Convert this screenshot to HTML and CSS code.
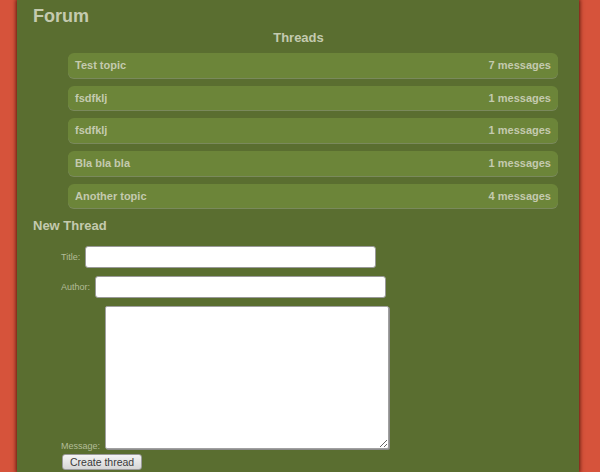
FILE: index.html
```html
<!DOCTYPE html>
<html lang="en">
<head>
<meta charset="utf-8">
<title>Forum</title>
<link rel="stylesheet" href="styles.css">
</head>
<body>
<div class="page">
  <h1 class="title">Forum</h1>
  <h2 class="threads-title">Threads</h2>
  <ul class="threads">
    <li class="thread"><span class="thread-name">Test topic</span><span class="thread-count">7 messages</span></li>
    <li class="thread"><span class="thread-name">fsdfklj</span><span class="thread-count">1 messages</span></li>
    <li class="thread"><span class="thread-name">fsdfklj</span><span class="thread-count">1 messages</span></li>
    <li class="thread"><span class="thread-name">Bla bla bla</span><span class="thread-count">1 messages</span></li>
    <li class="thread"><span class="thread-name">Another topic</span><span class="thread-count">4 messages</span></li>
  </ul>
  <h2 class="new-title">New Thread</h2>
  <form class="new-form">
    <div class="field">
      <label class="label" for="t">Title:</label>
      <input class="input" id="t" type="text">
    </div>
    <div class="field">
      <label class="label" for="a">Author:</label>
      <input class="input" id="a" type="text">
    </div>
    <div class="field field-message">
      <label class="label label-message" for="m">Message:</label>
      <textarea class="textarea" id="m"></textarea>
    </div>
    <div class="actions">
      <button class="button" type="button">Create thread</button>
    </div>
  </form>
</div>
</body>
</html>
```

FILE: styles.css
```css
html, body {
  margin: 0;
  padding: 0;
}
body {
  background: #d6533b;
  font-family: "Liberation Sans", Arial, sans-serif;
  color: #c4caaf;
  height: 472px;
  overflow: hidden;
}
.page {
  width: 562px;
  margin: 0 0 0 17px;
  min-height: 472px;
  box-sizing: border-box;
  padding: 6px 15px 0 16px;
  background: #5a6e30;
  box-shadow: 0 0 4px 1px rgba(60, 10, 0, 0.8);
}
.title {
  margin: 0;
  font-size: 18px;
  font-weight: bold;
  line-height: normal;
}
.threads-title {
  margin: 3px 0 0;
  text-align: center;
  font-size: 13px;
  font-weight: bold;
  line-height: 15px;
}
.threads {
  list-style: none;
  margin: 8px 6px 0 35px;
  padding: 0;
}
.thread {
  display: flex;
  justify-content: space-between;
  align-items: baseline;
  padding: 6px 7px 6px 7px;
  margin-bottom: 8px;
  height: 12.7px;
  font-size: 11px;
  font-weight: bold;
  line-height: 12.7px;
  background: #6c8539;
  border-radius: 6px;
  box-shadow: 0 1px 0 rgba(150, 160, 130, 0.55);
}
.new-title {
  margin: 10px 0 0;
  font-size: 13px;
  font-weight: bold;
  line-height: 15px;
}
.new-form {
  margin: 13px 0 0;
  padding-left: 28px;
}
.field {
  display: flex;
  align-items: center;
  gap: 4.5px;
  margin-bottom: 8px;
}
.field-message {
  align-items: flex-end;
  margin-bottom: 5px;
}
.label {
  font-size: 9px;
  color: #b3bd98;
  line-height: 10px;
}
.label-message {
  margin-bottom: -2px;
}
.input {
  box-sizing: border-box;
  width: 291px;
  height: 22px;
  margin: 0;
  border: 1px solid #999;
  border-radius: 3px;
  background: #fff;
  font-family: "Liberation Sans", Arial, sans-serif;
  font-size: 12px;
}
.textarea {
  box-sizing: border-box;
  width: 284px;
  height: 143px;
  margin: 0;
  border: 1px solid #a0a0a0;
  border-radius: 2px;
  box-shadow: 1px 1px 0 #8c8c8c;
  background: #fff;
  font-family: "Liberation Sans", Arial, sans-serif;
  font-size: 12px;
}
.actions {
  display: flex;
  padding-left: 1px;
}
.button {
  box-sizing: border-box;
  height: 16px;
  padding: 0 7px;
  margin: 0;
  border: 1px solid #9a9a9a;
  border-radius: 3px;
  background: linear-gradient(#f4f4f4, #d6d6d6);
  font-family: "Liberation Sans", Arial, sans-serif;
  font-size: 10.5px;
  line-height: 14px;
  color: #3a3a3a;
}
```
